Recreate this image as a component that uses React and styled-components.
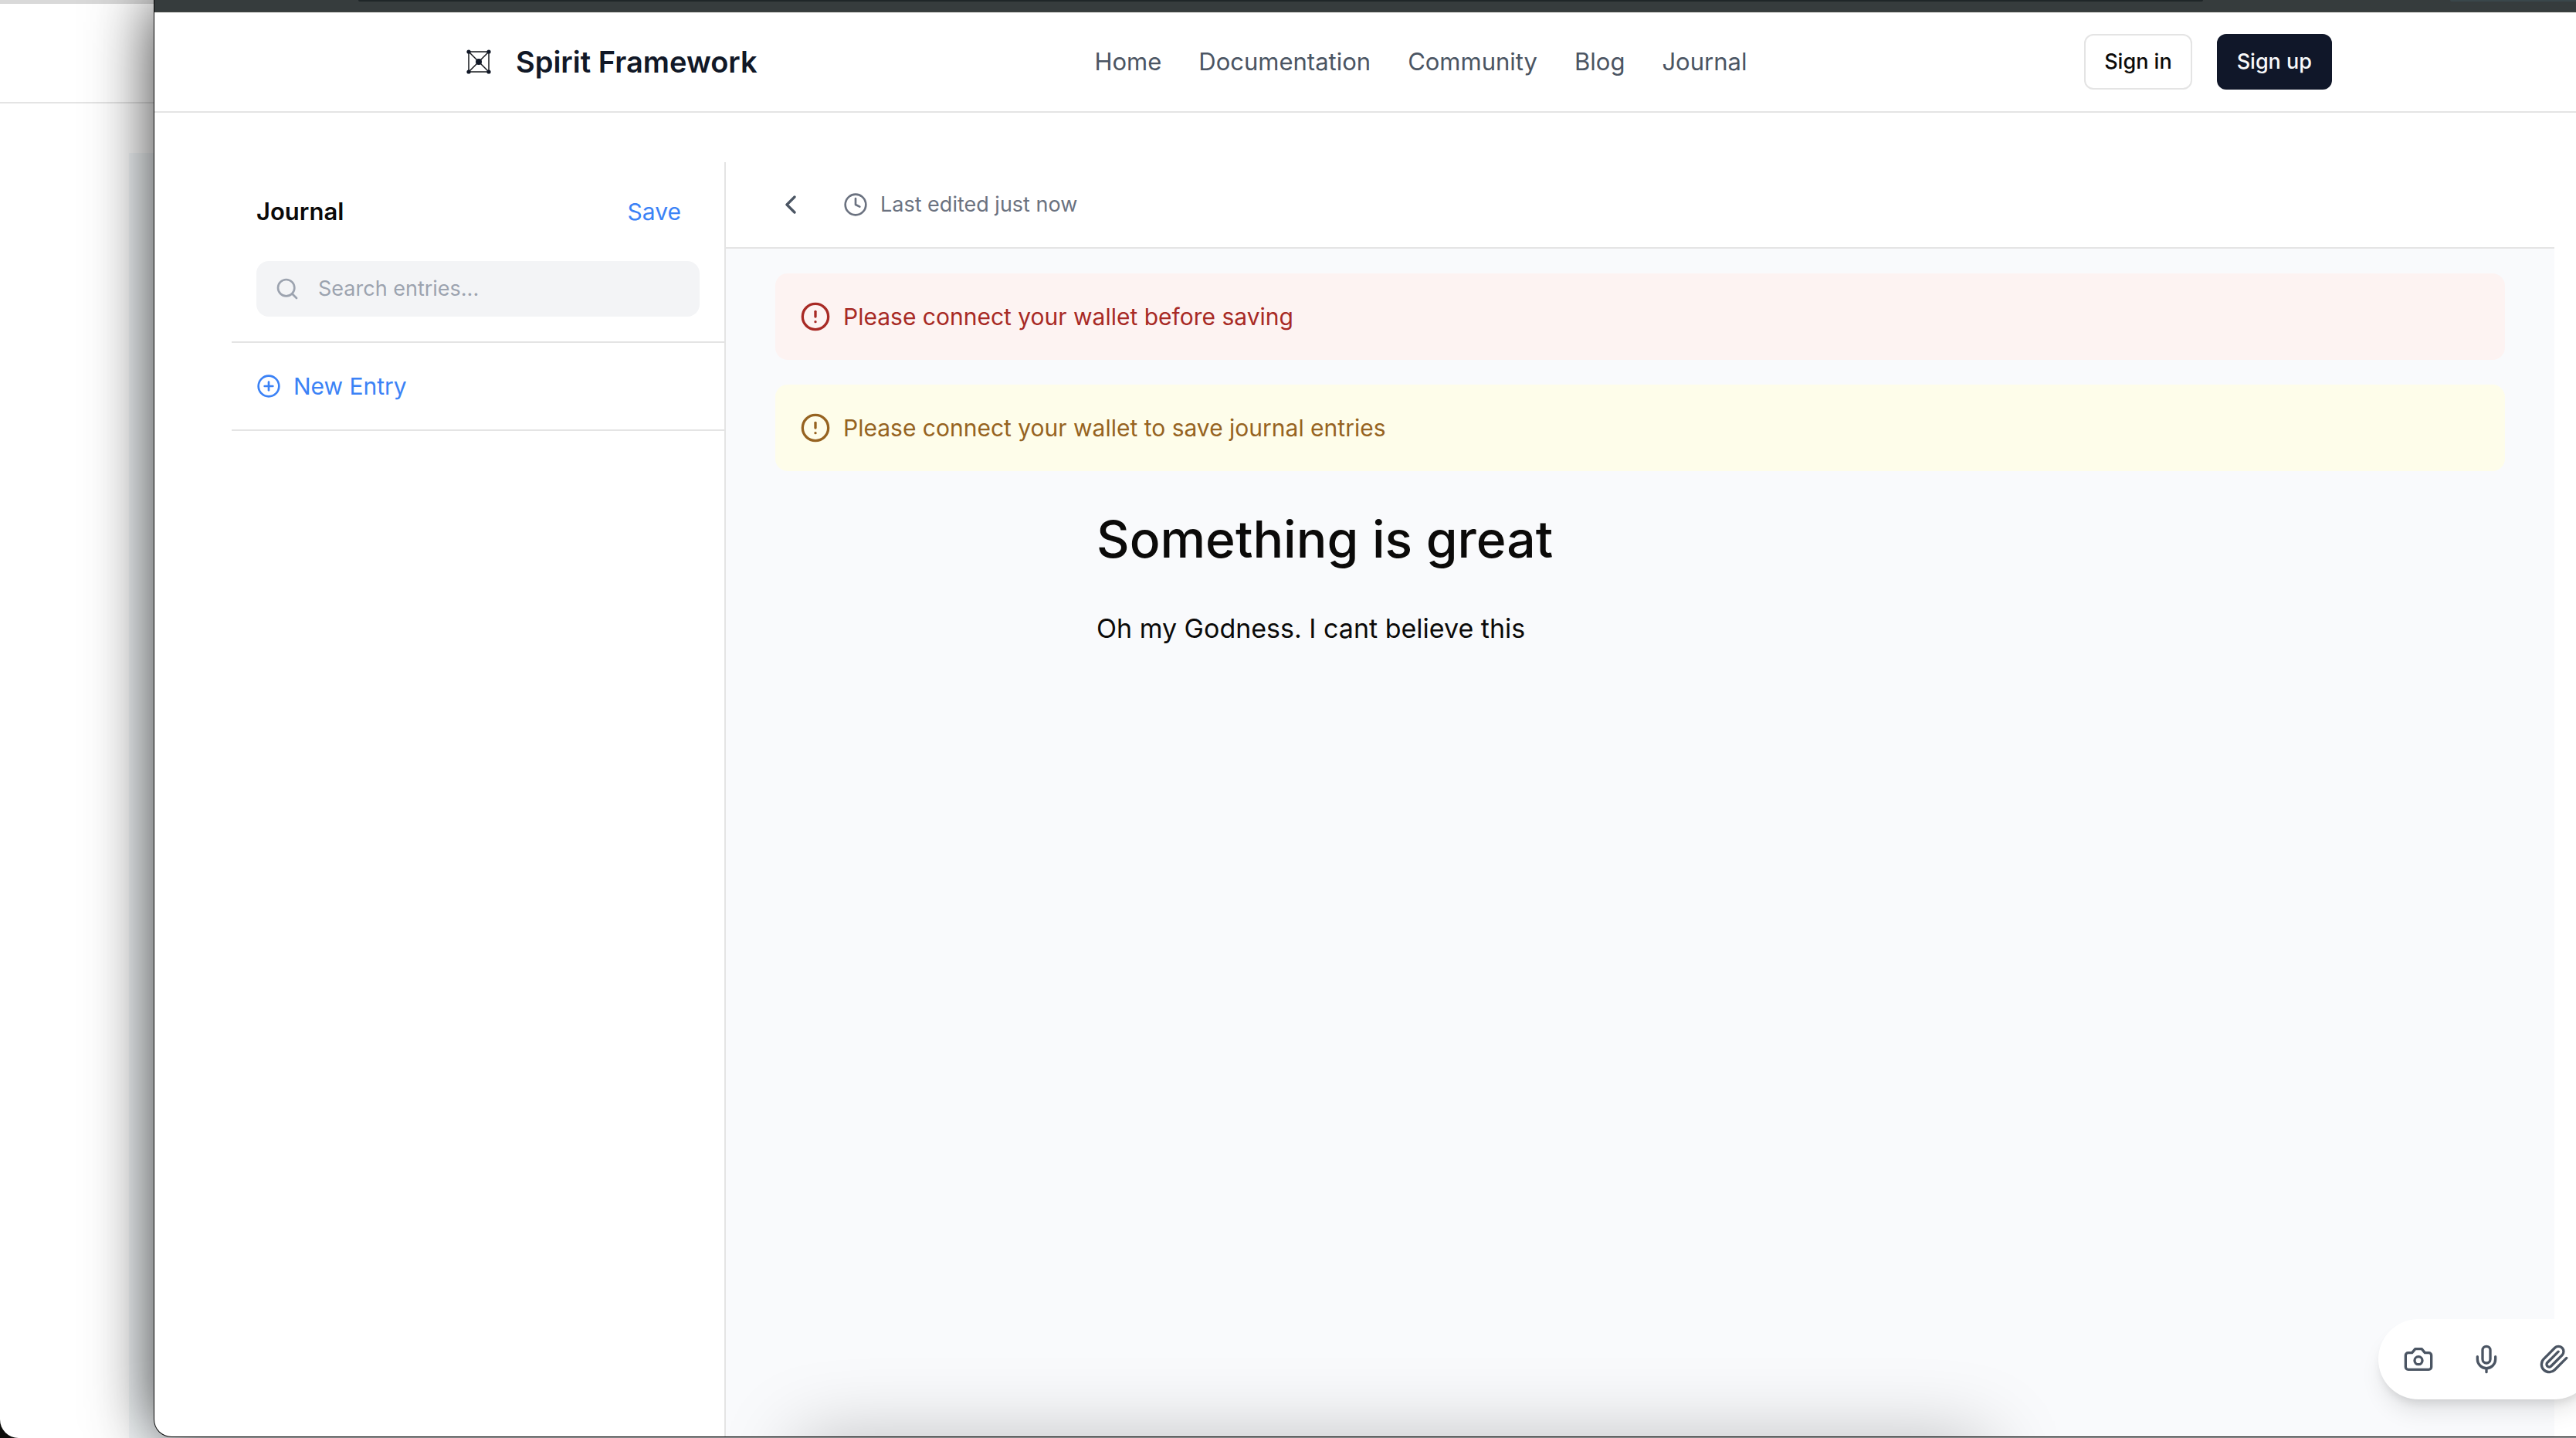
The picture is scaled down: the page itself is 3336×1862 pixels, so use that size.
import React from "react";
import styled, { createGlobalStyle } from "styled-components";
import { ChevronLeft, CircleAlert, CirclePlus, Clock, Search } from "lucide-react";

const GlobalStyle = createGlobalStyle`
  *, *::before, *::after { box-sizing: border-box; }
  body {
    margin: 0;
    background: #0c0c0a;
    color: #0b0a09;
    font-family: Inter, "Liberation Sans", sans-serif;
    font-size: 30px;
    line-height: 48px;
  }
  h1, h2, p { margin: 0; }
  button, input { font: inherit; color: inherit; border: 0; background: none; padding: 0; }
  button { cursor: pointer; }
  svg { display: block; flex: none; }
`;

const line = "#e4e4e4";

const Desktop = styled.div`
  position: relative;
  display: flex;
  height: 100vh;
  padding-bottom: 2px;
  overflow: hidden;
`;

/* The window that sits behind, seen only as a strip on the left */
const BackWindow = styled.div`
  position: absolute;
  inset: 0;
  display: flex;
  flex-direction: column;
  overflow: hidden;
  background: #fff;
  border-bottom-left-radius: 24px;
`;

const BackChrome = styled.div`
  height: 5px;
  background: #d9d9d9;
`;

const BackHeader = styled.div`
  height: 129px;
  border-bottom: 2px solid ${line};
`;

const BackPane = styled.div`
  flex: 1;
  margin: 64px 0 0 167px;
  background: #f4f8fa;
`;

const Window = styled.div`
  position: relative;
  display: flex;
  flex-direction: column;
  flex: 1;
  margin-left: 200px;
  margin-right: -72px;
  background: #fff;
  border-bottom-left-radius: 22px;
  box-shadow: 0 0 0 1px #050505, 0 0 84px rgba(0, 0, 0, 0.8);
`;

const Page = styled.div`
  position: relative;
  display: flex;
  flex-direction: column;
  flex: 1;
  overflow: hidden;
  border-bottom-left-radius: 22px;
`;

const Chrome = styled.div`
  display: flex;
  gap: 320px;
  height: 16px;
  padding-left: 264px;
  background: #363c3d;
  border-bottom: 1px solid #444541;
`;

const AddressBar = styled.div`
  flex: 1;
  height: 2px;
  background: #1f2628;
  border-radius: 0 0 8px 8px;
`;

const ChromeTools = styled.div`
  width: 235px;
  height: 2px;
  background: #3a474b;
  border-bottom-left-radius: 8px;
`;

const SiteHeader = styled.header`
  border-bottom: 2px solid ${line};
`;

const SiteBar = styled.div`
  display: flex;
  align-items: center;
  justify-content: space-between;
  max-width: 2432px;
  height: 128px;
  margin: 0 auto;
`;

const Brand = styled.a`
  display: flex;
  align-items: center;
  gap: 16px;
  color: #111827;
  font-size: 38px;
  font-weight: 600;
  text-decoration: none;
`;

const Nav = styled.nav`
  display: flex;
  gap: 48px;
  font-size: 31px;
`;

const NavLink = styled.a`
  color: #4b5563;
  text-decoration: none;
`;

const AuthButtons = styled.div`
  display: flex;
  gap: 32px;
`;

const AuthButton = styled.button`
  height: 72px;
  padding: 0 24px;
  border: 2px solid ${(p) => (p.$primary ? "#101729" : line)};
  border-radius: 12px;
  background: ${(p) => (p.$primary ? "#101729" : "#fff")};
  color: ${(p) => (p.$primary ? "#f9fafb" : "#0b0a09")};
  font-size: 27px;
  font-weight: 500;
`;

const Main = styled.main`
  display: flex;
  flex: 1;
  padding: 64px 100px 0;
`;

const Sidebar = styled.aside`
  width: 640px;
  border-right: 2px solid ${line};
`;

const SidebarTop = styled.div`
  display: flex;
  flex-direction: column;
  gap: 32px;
  padding: 32px;
  border-bottom: 2px solid ${line};
`;

const SidebarHeading = styled.div`
  display: flex;
  align-items: center;
  justify-content: space-between;
`;

const SidebarTitle = styled.h2`
  font-size: 31px;
  font-weight: 600;
`;

const SaveButton = styled.button`
  padding: 8px 24px;
  color: #3b82f6;
`;

const SearchBox = styled.label`
  display: flex;
  align-items: center;
  gap: 24px;
  height: 72px;
  padding: 0 24px;
  border-radius: 16px;
  background: #f3f4f6;
  color: #9ca3af;
`;

const SearchInput = styled.input`
  flex: 1;
  min-width: 0;
  font-size: 27px;
  outline: 0;
  &::placeholder { color: #9ca3af; opacity: 1; }
`;

const NewEntry = styled.button`
  display: flex;
  align-items: center;
  gap: 16px;
  width: 100%;
  padding: 32px;
  border-bottom: 2px solid ${line};
  color: #3b82f6;
`;

const Editor = styled.section`
  display: flex;
  flex-direction: column;
  flex: 1;
`;

const EditorBar = styled.div`
  display: flex;
  align-items: center;
  gap: 48px;
  height: 112px;
  padding: 0 64px;
  border-bottom: 2px solid ${line};
`;

const BackButton = styled.button`
  color: #4b5563;
`;

const EditedStatus = styled.div`
  display: flex;
  align-items: center;
  gap: 16px;
  color: #6b7280;
  font-size: 27px;
`;

const EditorBody = styled.div`
  display: flex;
  flex-direction: column;
  flex: 1;
  gap: 32px;
  padding: 32px 64px;
  background: #f9fafc;
`;

const tones = {
  error: { background: "#fdf3f2", color: "#a82a25" },
  warning: { background: "#fefdea", color: "#966321" },
};

const Alert = styled.div`
  display: flex;
  align-items: center;
  gap: 16px;
  padding: 32px;
  border-radius: 16px;
  background: ${(p) => tones[p.$tone].background};
  color: ${(p) => tones[p.$tone].color};
`;

const Entry = styled.article`
  display: flex;
  flex-direction: column;
  gap: 48px;
  width: 100%;
  max-width: 1408px;
  margin: 0 auto;
  padding-top: 16px;
`;

const EntryTitle = styled.h1`
  font-size: 66px;
  font-weight: 500;
  line-height: 80px;
  outline: 0;
`;

const EntryText = styled.p`
  font-size: 34px;
  line-height: 56px;
  outline: 0;
`;

/* Panel parked under the lower edge; only its shadow reaches the page */
const ParkedPanel = styled.div`
  position: absolute;
  top: calc(100% + 4px);
  left: 50%;
  width: 1536px;
  height: 200px;
  margin-left: -768px;
  box-shadow: 0 0 100px rgba(0, 0, 0, 0.25);
`;

const MediaBar = styled.div`
  position: absolute;
  right: 48px;
  bottom: 48px;
  display: flex;
  gap: 16px;
  padding: 16px;
  border-radius: 52px;
  background: #fff;
  box-shadow: 0 20px 30px -6px rgba(0, 0, 0, 0.1), 0 8px 12px -4px rgba(0, 0, 0, 0.1);
`;

const MediaButton = styled.button`
  padding: 16px;
  color: #4b5563;
`;

const Stroked = ({ children }) => (
  <svg width="40" height="40" viewBox="0 0 24 24" fill="none" stroke="currentColor" strokeWidth="2" strokeLinecap="round" strokeLinejoin="round" aria-hidden="true">
    {children}
  </svg>
);

const CameraIcon = () => (
  <Stroked>
    <path d="M14.5 4h-5L7 7H4a2 2 0 0 0-2 2v9a2 2 0 0 0 2 2h16a2 2 0 0 0 2-2V9a2 2 0 0 0-2-2h-3l-2.5-3z" />
    <circle cx="12" cy="13" r="3" />
  </Stroked>
);

const MicIcon = () => (
  <Stroked>
    <path d="M12 2a3 3 0 0 0-3 3v7a3 3 0 0 0 6 0V5a3 3 0 0 0-3-3Z" />
    <path d="M19 10v2a7 7 0 0 1-14 0v-2" />
    <path d="M12 19v3" />
  </Stroked>
);

const PaperclipIcon = () => (
  <Stroked>
    <path d="m21.44 11.05-9.19 9.19a6 6 0 0 1-8.49-8.49l8.57-8.57A4 4 0 1 1 18 8.84l-8.59 8.57a2 2 0 0 1-2.83-2.83l8.49-8.48" />
  </Stroked>
);

const BrandMark = () => (
  <svg width="64" height="64" viewBox="0 0 64 64" fill="none" stroke="#16181d" strokeWidth="1.5" aria-hidden="true">
    <rect x="19" y="19" width="26" height="26" />
    <path d="M19 19 45 45M45 19 19 45" />
    <g fill="#111827" stroke="none">
      <circle cx="19" cy="19" r="2.6" />
      <circle cx="45" cy="19" r="2.6" />
      <circle cx="19" cy="45" r="2.6" />
      <circle cx="45" cy="45" r="2.6" />
      <circle cx="32" cy="32" r="4" />
    </g>
  </svg>
);

const links = ["Home", "Documentation", "Community", "Blog", "Journal"];

export default function App() {
  return (
    <Desktop>
      <GlobalStyle />
      <BackWindow>
        <BackChrome />
        <BackHeader />
        <BackPane />
      </BackWindow>
      <Window>
        <Page>
          <Chrome>
            <AddressBar />
            <ChromeTools />
          </Chrome>
          <SiteHeader>
            <SiteBar>
              <Brand href="#">
                <BrandMark />
                Spirit Framework
              </Brand>
              <Nav>
                {links.map((name) => (
                  <NavLink key={name} href="#">{name}</NavLink>
                ))}
              </Nav>
              <AuthButtons>
                <AuthButton type="button">Sign in</AuthButton>
                <AuthButton type="button" $primary>Sign up</AuthButton>
              </AuthButtons>
            </SiteBar>
          </SiteHeader>
          <Main>
            <Sidebar>
              <SidebarTop>
                <SidebarHeading>
                  <SidebarTitle>Journal</SidebarTitle>
                  <SaveButton type="button">Save</SaveButton>
                </SidebarHeading>
                <SearchBox>
                  <Search size={32} />
                  <SearchInput type="text" placeholder="Search entries..." aria-label="Search entries" />
                </SearchBox>
              </SidebarTop>
              <NewEntry type="button">
                <CirclePlus size={32} />
                New Entry
              </NewEntry>
            </Sidebar>
            <Editor>
              <EditorBar>
                <BackButton type="button" aria-label="Back">
                  <ChevronLeft size={40} />
                </BackButton>
                <EditedStatus>
                  <Clock size={32} />
                  Last edited just now
                </EditedStatus>
              </EditorBar>
              <EditorBody>
                <Alert role="alert" $tone="error">
                  <CircleAlert size={40} />
                  Please connect your wallet before saving
                </Alert>
                <Alert role="status" $tone="warning">
                  <CircleAlert size={40} />
                  Please connect your wallet to save journal entries
                </Alert>
                <Entry>
                  <EntryTitle contentEditable suppressContentEditableWarning>Something is great</EntryTitle>
                  <EntryText contentEditable suppressContentEditableWarning>Oh my Godness. I cant believe this</EntryText>
                </Entry>
              </EditorBody>
            </Editor>
          </Main>
          <ParkedPanel />
          <MediaBar>
            <MediaButton type="button" aria-label="Take photo"><CameraIcon /></MediaButton>
            <MediaButton type="button" aria-label="Record audio"><MicIcon /></MediaButton>
            <MediaButton type="button" aria-label="Attach file"><PaperclipIcon /></MediaButton>
          </MediaBar>
        </Page>
      </Window>
    </Desktop>
  );
}
